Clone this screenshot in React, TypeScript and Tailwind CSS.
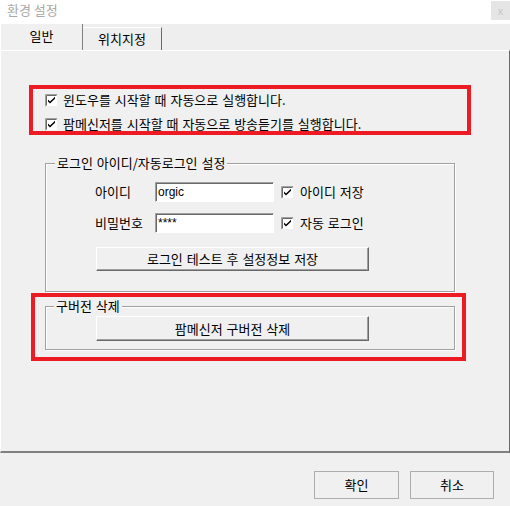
import React from "react";

const CheckBox = () => (
  <svg width="13" height="13" viewBox="0 0 13 13" className="shrink-0">
    <rect x="0" y="0" width="13" height="13" fill="#ffffff" />
    <path d="M0.5 12.5 V0.5 H12.5" stroke="#a0a0a0" fill="none" />
    <path d="M1.5 11.5 V1.5 H11.5" stroke="#696969" fill="none" />
    <path d="M12.5 0.5 V12.5 H0.5" stroke="#f0f0f0" fill="none" />
    <path d="M3 5.5 L5 7.5 L10 2.8 V4.8 L5 9.5 L3 7.5 Z" fill="#000" />
  </svg>
);

const CheckRow = ({ label }: { label: string }) => (
  <div className="flex items-center gap-[5px]">
    <CheckBox />
    <span className="leading-[14px] [word-spacing:1px]">{label}</span>
  </div>
);

const RaisedButton = ({ label, h }: { label: string; h: string }) => (
  <button
    className={`ml-[50px] flex w-[273px] ${h} items-center justify-center border border-t-white border-l-white border-r-[#696969] border-b-[#696969] bg-[#f0f0f0] leading-[14px] shadow-[inset_-1px_-1px_0_#a0a0a0] [word-spacing:1px]`}
  >
    {label}
  </button>
);

const Field = ({
  label,
  value,
  check,
  className,
}: {
  label: string;
  value: string;
  check: string;
  className: string;
}) => (
  <div className={`ml-[49px] flex items-center ${className}`}>
    <span className="w-[60px] leading-[14px]">{label}</span>
    <div className="flex h-[20px] w-[119px] items-center border border-t-[#a0a0a0] border-l-[#a0a0a0] border-r-white border-b-white bg-white pl-[2px] font-['Liberation_Sans',sans-serif] text-[12px] leading-[14px] shadow-[inset_1px_1px_0_#696969]">
      {value}
    </div>
    <div className="ml-[7px] flex items-center gap-[6px]">
      <CheckBox />
      <span className="leading-[14px] [word-spacing:1px]">{check}</span>
    </div>
  </div>
);

export default function App() {
  return (
    <div className="flex h-[506px] w-[510px] flex-col bg-[#f0f0f0] font-['Noto_Sans_CJK_KR','Noto_Sans',sans-serif] text-[13px] text-black">
      {/* title bar */}
      <div className="flex h-[24px] items-start justify-between bg-white">
        <span className="pl-[7px] pt-[3px] leading-[14px] text-[#a8a8a8]">환경 설정</span>
        <div className="mt-[1px] flex h-[19px] w-[19px] items-center justify-center bg-[#e5e5e5] text-[11px] leading-none text-[#c8c8c8]">
          x
        </div>
      </div>

      {/* tabs */}
      <div className="flex h-[26px] items-end bg-[#eeeeee]">
        <div className="flex h-[26px] w-[83px] items-center justify-center border-l border-r border-l-white border-r-[#808080] bg-[#f0f0f0] pb-[2px] leading-[14px]">
          일반
        </div>
        <div className="flex h-[23px] w-[79px] items-center justify-center border-t border-r border-t-white border-r-[#696969] leading-[14px]">
          위치지정
        </div>
      </div>

      {/* panel */}
      <div className="flex h-[403px] flex-col border-t border-l border-r border-b-2 border-t-white border-l-white border-r-[#696969] border-b-[#808080]">
        <div className="ml-[28px] mt-[34px] flex h-[50px] w-[442px] flex-col gap-[10px] border-4 border-[#ed1c24] pl-[12px] pt-[4px]">
          <CheckRow label="윈도우를 시작할 때 자동으로 실행합니다." />
          <CheckRow label="팜메신저를 시작할 때 자동으로 방송듣기를 실행합니다." />
        </div>

        <div className="relative ml-[44px] mt-[28px] h-[129px] w-[410px] border border-[#a0a0a0] shadow-[inset_1px_1px_0_#fff,1px_1px_0_#fff]">
          <span className="absolute left-[9px] top-[-8px] bg-[#f0f0f0] px-[2px] leading-[14px] [word-spacing:1px]">
            로그인 아이디/자동로그인 설정
          </span>
          <Field className="mt-[18px]" label="아이디" value="orgic" check="아이디 저장" />
          <Field className="mt-[11px]" label="비밀번호" value="****" check="자동 로그인" />
          <div className="mt-[14px]">
            <RaisedButton label="로그인 테스트 후 설정정보 저장" h="h-[24px]" />
          </div>
        </div>

        <div className="ml-[30px] mt-[1px] h-[68px] w-[435px] border-4 border-[#ed1c24] pl-[10px] pt-[9px]">
          <div className="relative h-[44px] w-[410px] border border-[#a0a0a0] pt-[9px] shadow-[inset_1px_1px_0_#fff,1px_1px_0_#fff]">
            <span className="absolute left-[8px] top-[-8px] bg-[#f0f0f0] px-[2px] leading-[14px] [word-spacing:1px]">
              구버전 삭제
            </span>
            <RaisedButton label="팜메신저 구버전 삭제" h="h-[25px]" />
          </div>
        </div>
      </div>

      {/* bottom buttons */}
      <div className="mt-[18px] flex justify-end gap-[11px] pr-[16px]">
        <button className="flex h-[28px] w-[85px] items-center justify-center border border-[#adadad] bg-[#f0f0f0] leading-[14px]">
          확인
        </button>
        <button className="flex h-[28px] w-[84px] items-center justify-center border border-[#adadad] bg-[#f0f0f0] leading-[14px]">
          취소
        </button>
      </div>
    </div>
  );
}
